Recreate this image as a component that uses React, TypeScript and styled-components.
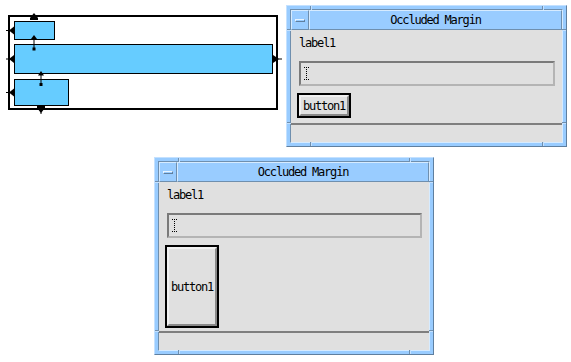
import React from "react";
import styled, { createGlobalStyle } from "styled-components";

const Global = createGlobalStyle`
  html, body { margin: 0; padding: 0; background: #fff; }
  body { width: 571px; height: 362px; overflow: hidden; font-family: "DejaVu Sans Mono", monospace; }
`;

const Desktop = styled.div`
  position: relative;
  width: 571px;
  height: 362px;
  background: #fff;
`;

const Diagram = styled.svg`
  position: absolute;
  left: 0;
  top: 0;
`;

const Frame = styled.div<{ $x: number; $y: number; $w: number; $h: number }>`
  position: absolute;
  left: ${(p) => p.$x}px;
  top: ${(p) => p.$y}px;
  width: ${(p) => p.$w}px;
  height: ${(p) => p.$h}px;
  box-sizing: border-box;
  background: #99ccff;
  border: 1px solid;
  border-color: #c4e1ff #5f7f9f #5f7f9f #c4e1ff;
  padding: 3px;
  display: flex;
`;

const Notch = styled.div<{ $v: boolean }>`
  position: absolute;
  background: #6f8fae;
  ${(p) => (p.$v ? "width: 1px; height: 4px; box-shadow: 1px 0 0 #c4e1ff;" : "width: 4px; height: 1px; box-shadow: 0 1px 0 #c4e1ff;")}
`;

const Inner = styled.div`
  flex: 1;
  min-width: 0;
  display: flex;
  flex-direction: column;
  border: 1px solid;
  border-color: #6f8fae #d6ebff #d6ebff #6f8fae;
`;

const TitleBar = styled.div`
  height: 20px;
  display: flex;
  flex-shrink: 0;
  background: #99ccff;
`;

const MenuBox = styled.div`
  width: 18px;
  box-sizing: border-box;
  border: 1px solid;
  border-color: #d6ebff #6f8fae #6f8fae #d6ebff;
  display: flex;
  align-items: center;
  justify-content: center;
`;

const MenuDash = styled.div`
  width: 8px;
  height: 1px;
  background: #99ccff;
  border: 1px solid;
  border-color: #e8f4ff #5f7f9f #5f7f9f #e8f4ff;
`;

const Title = styled.div`
  flex: 1;
  box-sizing: border-box;
  border: 1px solid;
  border-color: #d6ebff #6f8fae #6f8fae #d6ebff;
  text-align: center;
  font: 12px/18px "DejaVu Sans Mono", monospace;
  letter-spacing: -1.2px;
  color: #000;
`;

const Content = styled.div`
  flex: 1;
  background: #e0e0e0;
  display: flex;
  flex-direction: column;
  align-items: flex-start;
  padding: 4px 7px 0 8px;
  border-bottom: 2px solid #7f7f7f;
`;

const Label = styled.div`
  font: 12px/14px "DejaVu Sans Mono", monospace;
  letter-spacing: -1.2px;
  color: #000;
  margin-top: 2px;
`;

const Field = styled.div`
  align-self: stretch;
  height: 25px;
  box-sizing: border-box;
  margin-top: 11px;
  border: 2px solid;
  border-color: #7a7a7a #b4b4b4 #b4b4b4 #7a7a7a;
  display: flex;
  align-items: center;
  padding-left: 3px;
`;

const Button = styled.div<{ $h: number }>`
  margin-top: 7px;
  margin-left: -2px;
  width: 54px;
  height: ${(p) => p.$h}px;
  box-sizing: border-box;
  border: 2px solid #000;
  display: flex;
`;

const ButtonFace = styled.div`
  flex: 1;
  background: #e0e0e0;
  border: 2px solid;
  border-color: #f0f0f0 #8a8a8a #8a8a8a #f0f0f0;
  display: flex;
  align-items: center;
  justify-content: center;
  font: 12px/14px "DejaVu Sans Mono", monospace;
  letter-spacing: -1.2px;
  color: #000;
`;

const BottomStrip = styled.div`
  height: 17px;
  flex-shrink: 0;
  background: #e0e0e0;
`;

const Cursor = () => (
  <svg width="5" height="13" viewBox="0 0 5 13">
    <rect x="0" y="0" width="1" height="1" fill="#000" />
    <rect x="2" y="0" width="1" height="1" fill="#000" />
    <rect x="4" y="0" width="1" height="1" fill="#000" />
    {[2, 4, 6, 8, 10].map((y) => (
      <rect key={y} x="2" y={y} width="1" height="1" fill="#000" />
    ))}
    <rect x="0" y="12" width="1" height="1" fill="#000" />
    <rect x="2" y="12" width="1" height="1" fill="#000" />
    <rect x="4" y="12" width="1" height="1" fill="#000" />
  </svg>
);

type WinProps = { x: number; y: number; w: number; h: number; buttonH: number };

const Window = ({ x, y, w, h, buttonH }: WinProps) => {
  const n = 23;
  return (
    <Frame $x={x} $y={y} $w={w} $h={h}>
      <Notch $v style={{ left: n, top: 0 }} />
      <Notch $v style={{ right: n, top: 0 }} />
      <Notch $v style={{ left: n, bottom: 0 }} />
      <Notch $v style={{ right: n, bottom: 0 }} />
      <Notch $v={false} style={{ left: 0, top: n }} />
      <Notch $v={false} style={{ right: 0, top: n }} />
      <Notch $v={false} style={{ left: 0, bottom: n }} />
      <Notch $v={false} style={{ right: 0, bottom: n }} />
      <Inner>
        <TitleBar>
          <MenuBox>
            <MenuDash />
          </MenuBox>
          <Title>Occluded Margin</Title>
        </TitleBar>
        <Content>
          <Label>label1</Label>
          <Field>
            <Cursor />
          </Field>
          <Button $h={buttonH}>
            <ButtonFace>button1</ButtonFace>
          </Button>
        </Content>
        <BottomStrip />
      </Inner>
    </Frame>
  );
};

const LayoutDiagram = () => (
  <Diagram width="285" height="116" viewBox="0 0 285 116">
    <rect x="9" y="16" width="268" height="93" fill="#fff" stroke="#000" strokeWidth="2" />
    <rect x="14.5" y="21.5" width="40" height="18" fill="#66ccff" stroke="#000" strokeWidth="1" />
    <rect x="14.5" y="44.5" width="258" height="29" fill="#66ccff" stroke="#000" strokeWidth="1" />
    <rect x="14.5" y="79.5" width="54" height="26" fill="#66ccff" stroke="#000" strokeWidth="1" />
    <g fill="#000" stroke="none">
      <polygon points="30,20 30,18 34,13 38,18 38,20" />
      <polygon points="37,105 45,105 45,108 41,113 37,108" />
      <rect x="40.5" y="108" width="1" height="6" />
      {[30.5, 59, 92.5].map((cy) => (
        <g key={cy}>
          <rect x="6" y={cy - 0.5} width="5" height="1" />
          <polygon points={`9,${cy} 14,${cy - 4} 14,${cy + 4}`} />
        </g>
      ))}
      <polygon points="273,55 279,59 273,63" />
      <rect x="278" y="58.5" width="4" height="1" />
      <polygon points="31,39 34,35 37,39" />
      <rect x="33.5" y="38" width="1" height="11" />
      <rect x="32.5" y="47.5" width="3" height="3" />
      <polygon points="38,75.5 41,71 44,75.5" />
      <rect x="40.5" y="74" width="1" height="10" />
      <rect x="39.5" y="83" width="3" height="3" />
    </g>
  </Diagram>
);

export default function App() {
  return (
    <Desktop>
      <Global />
      <LayoutDiagram />
      <Window x={286} y={5} w={281} h={142} buttonH={25} />
      <Window x={154} y={157} w={280} h={198} buttonH={83} />
    </Desktop>
  );
}
